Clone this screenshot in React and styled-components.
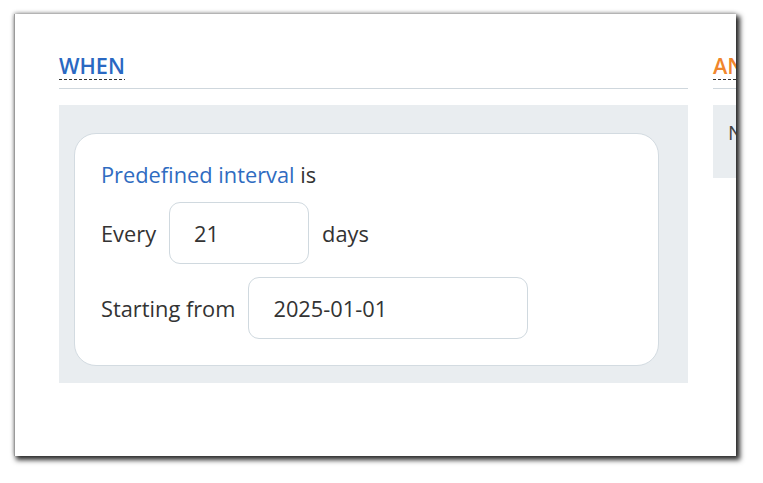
import React from "react";
import styled, { createGlobalStyle } from "styled-components";

const Global = createGlobalStyle`
  html, body { margin: 0; padding: 0; background: #ffffff; }
  body { font-family: "Open Sans", "Noto Sans", sans-serif; color: #333; }
  * { box-sizing: border-box; }
`;

const Stage = styled.div`
  width: 763px;
  height: 483px;
  padding: 14px 0 0 14px;
  background: #fff;
`;

const Window = styled.div`
  width: 722px;
  height: 442px;
  background: #fff;
  overflow: hidden;
  border-left: 1px solid #9a9a9a;
  box-shadow: 3px 3px 5px 1px rgba(0, 0, 0, 0.82), 0 -1px 4px rgba(0, 0, 0, 0.3);
  padding: 39px 0 0 44px;
`;

const Columns = styled.div`
  display: flex;
  gap: 25px;
  width: max-content;
`;

const Column = styled.section`
  width: 629px;
  display: flex;
  flex-direction: column;
`;

const Heading = styled.div`
  padding-bottom: 8px;
  border-bottom: 1px solid #cfd7dd;
  margin-bottom: 16px;
`;

const Title = styled.span`
  display: inline-block;
  font-size: 21.7px;
  font-weight: 600;
  line-height: 26px;
  color: ${(p) => p.$color};
  padding-bottom: 1px;
  background-image: linear-gradient(to right, #333 60%, transparent 60%);
  background-size: 5px 1px;
  background-repeat: repeat-x;
  background-position: left bottom;
`;

const Panel = styled.div`
  background: #e9edf0;
  padding: ${(p) => p.$pad};
`;

const Card = styled.div`
  width: 585px;
  background: #fff;
  border: 1px solid #d3dbe1;
  border-radius: 22px;
  padding: 24px 26px 26px 26px;
  display: flex;
  flex-direction: column;
  gap: 11px;
`;

const Line = styled.div`
  display: flex;
  align-items: center;
  gap: 13px;
  font-size: 21.8px;
  line-height: 33px;
  color: #333;
  margin-top: ${(p) => p.$mt || 0}px;
`;

const Link = styled.span`
  color: #2f6cc1;
`;

const Field = styled.div`
  width: ${(p) => p.$w}px;
  height: 62px;
  border: 1px solid #d0d9df;
  border-radius: 11px;
  padding: 0 24px;
  display: flex;
  align-items: center;
  font-size: 21.8px;
  color: #333;
  background: #fff;
`;

const Note = styled.div`
  font-size: 20px;
  line-height: 30px;
  color: #444;
  white-space: nowrap;
`;

export default function App() {
  return (
    <>
      <Global />
      <Stage>
        <Window>
          <Columns>
            <Column>
              <Heading>
                <Title $color="#2a68c2">WHEN</Title>
              </Heading>
              <Panel $pad="28px 29px 17px 15px">
                <Card>
                  <Line>
                    <span>
                      <Link>Predefined interval</Link> is
                    </span>
                  </Line>
                  <Line>
                    <span>Every</span>
                    <Field $w={140}>21</Field>
                    <span>days</span>
                  </Line>
                  <Line $mt={2}>
                    <span>Starting from</span>
                    <Field $w={280}>2025-01-01</Field>
                  </Line>
                </Card>
              </Panel>
            </Column>
            <Column>
              <Heading>
                <Title $color="#f0862c">AND IF</Title>
              </Heading>
              <Panel $pad="13px 16px 30px 15px">
                <Note>No conditions</Note>
              </Panel>
            </Column>
          </Columns>
        </Window>
      </Stage>
    </>
  );
}
